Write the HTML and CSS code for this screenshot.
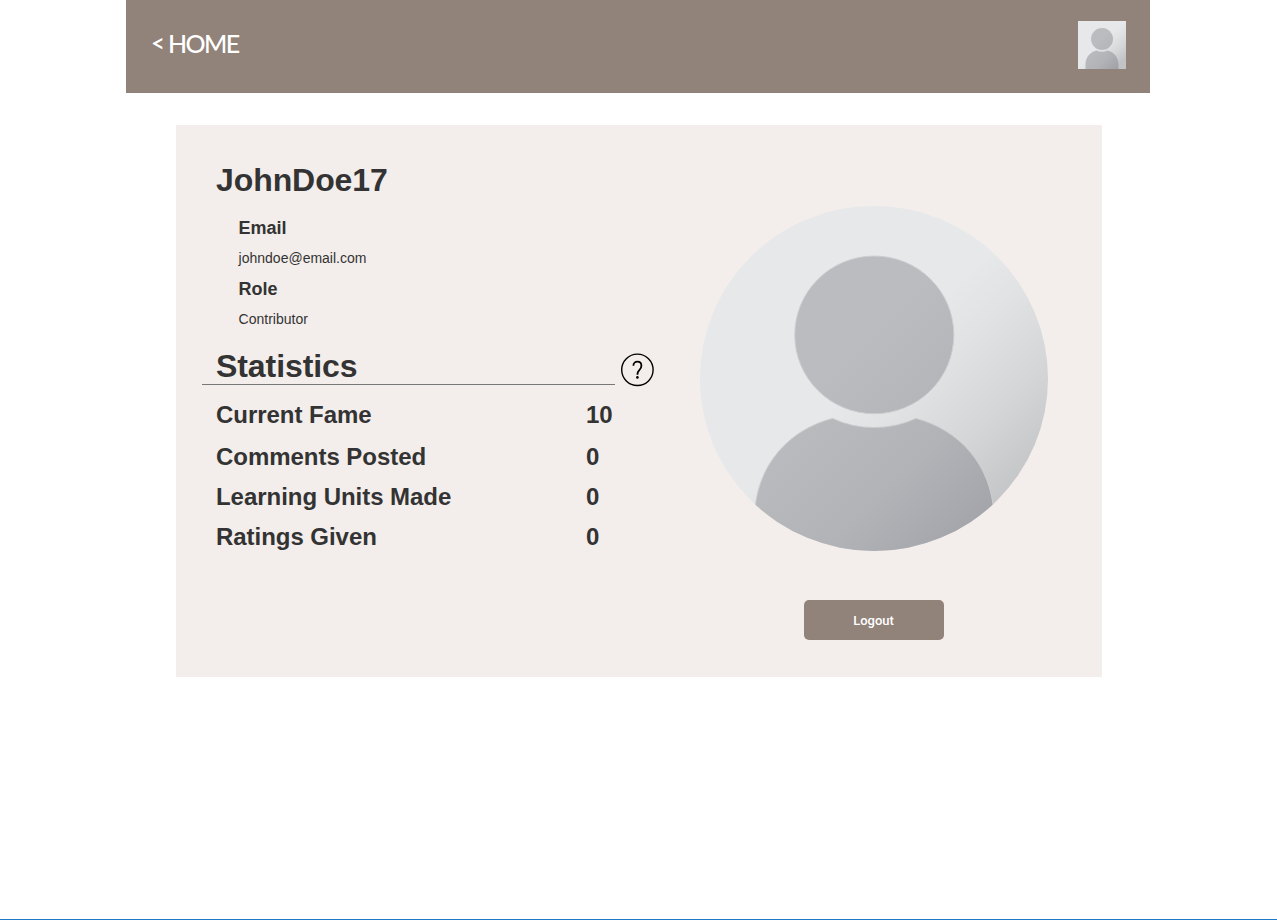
FILE: index.html
```html
<!DOCTYPE html>
<html lang="en">
<head>
<meta charset="utf-8">
<title>Profile</title>
<link rel="stylesheet" href="styles.css">
</head>
<body>
<svg class="defs" aria-hidden="true">
  <defs>
    <linearGradient id="backdrop" x1="0" y1="0" x2="1" y2="1">
      <stop offset="0.48" stop-color="#e6e8ea"/>
      <stop offset="0.58" stop-color="#e1e2e4"/>
      <stop offset="0.72" stop-color="#d5d6d8"/>
      <stop offset="0.88" stop-color="#c2c3c5"/>
    </linearGradient>
    <linearGradient id="figure" gradientUnits="userSpaceOnUse" x1="0" y1="0" x2="348" y2="348">
      <stop offset="0.42" stop-color="#bbbcc0"/>
      <stop offset="0.68" stop-color="#b2b3b7"/>
      <stop offset="0.9" stop-color="#a1a2a7"/>
    </linearGradient>
    <symbol id="person" viewBox="0 0 348 348" preserveAspectRatio="none">
      <rect width="348" height="348" fill="url(#backdrop)"/>
      <g fill="url(#figure)" stroke="#cccdcf" stroke-width="1">
        <ellipse cx="174.300" cy="130" rx="79.500" ry="79.500"/>
        <path d="M54.500 349V312C56.500 262 88 226 132.500 214.300Q152 223.500 174 223.500T216 214.300C260 226 292 262 294 312V349Z"/>
      </g>
    </symbol>
  </defs>
</svg>
<div class="page">
  <header class="topbar">
    <a class="home"><span class="arrow">&lt;</span><span class="home-label">HOME</span></a>
    <svg class="thumb"><use href="#person"/></svg>
  </header>
  <main class="card">
    <section class="details">
      <h1 class="title">JohnDoe17</h1>
      <dl class="info">
        <dt>Email</dt><dd>johndoe@email.com</dd>
        <dt>Role</dt><dd>Contributor</dd>
      </dl>
      <div class="stats-head">
        <h1 class="title stats-title">Statistics</h1>
        <svg class="help" viewBox="0 0 34 34" fill="none" stroke="#000">
          <circle cx="17.400" cy="16.800" r="15.700" stroke-width="1.400"/>
          <path d="M13.400 12.800C13.400 10.200 15 8.700 17.400 8.700s4 1.700 4 4c0 2-.9 3.200-2.100 4.500C17.900 18.600 17.400 19.600 17.400 21.700" stroke-width="1.800"/>
          <circle cx="17.400" cy="24.400" r="1.300" fill="#000" stroke="none"/>
        </svg>
      </div>
      <div class="stats">
        <div class="row first"><span>Current Fame</span><span>10</span></div>
        <div class="row"><span>Comments Posted</span><span>0</span></div>
        <div class="row"><span>Learning Units Made</span><span>0</span></div>
        <div class="row"><span>Ratings Given</span><span>0</span></div>
      </div>
    </section>
    <aside class="profile">
      <svg class="portrait"><use href="#person"/></svg>
      <button class="logout">Logout</button>
    </aside>
  </main>
</div>
</body>
</html>
```
FILE: styles.css
```css
* { box-sizing: border-box; }
body {
  margin: 0;
  height: 920px;
  background: #fff;
  border-bottom: 1px solid #1e7ac8;
  color: #333;
  font-family: "Liberation Sans", Arial, sans-serif;
}
.defs { display: block; width: 0; height: 0; }
.page { width: 1024px; margin-left: 126px; }
.topbar {
  height: 93px;
  padding: 21px 24px 0 25px;
  display: flex;
  justify-content: space-between;
  align-items: flex-start;
  background: #91827a;
}
.home {
  display: flex;
  padding-top: 7px;
  color: #fff;
  font: 500 25px/30px Lato, sans-serif;
}
.arrow { width: 17px; font-weight: 600; font-size: 24px; }
.home-label { letter-spacing: -1.6px; }
.thumb { width: 48px; height: 48px; }
.card {
  display: flex;
  width: 926px;
  height: 552px;
  margin: 32px 0 0 50px;
  background: #f3eeeb;
}
.details { width: 524px; padding: 37px 0 0 26px; }
.title {
  margin: 0;
  padding-left: 14px;
  font-size: 32px;
  line-height: 36px;
  letter-spacing: -0.08px;
}
.info { margin: 20px 0 0 36.6px; }
.info dt { font-size: 18px; line-height: 20px; font-weight: bold; }
.info dd { margin: 12px 0 13px; font-size: 14px; line-height: 16px; }
.info dd:last-child { margin-bottom: 0; }
.stats-head { display: flex; gap: 5px; margin-top: 21px; }
.stats-title { width: 413px; height: 37px; border-bottom: 1px solid #777; }
.help { width: 34px; height: 34px; margin-top: 5px; }
.stats { display: flex; flex-direction: column; gap: 12px; margin-top: 14px; padding-left: 14px; }
.row {
  display: grid;
  grid-template-columns: 370px auto;
  font-size: 24px;
  line-height: 28px;
  font-weight: bold;
  letter-spacing: -0.04px;
}
.first { margin-bottom: 2px; }
.profile { display: flex; flex-direction: column; align-items: center; width: 348px; padding-top: 81px; }
.portrait { width: 348px; height: 345px; border-radius: 50%; }
.logout {
  width: 140px;
  height: 40px;
  margin-top: 49px;
  padding: 0 7px 0 6px;
  border: 0;
  border-radius: 5px;
  background: #91827a;
  color: #fff;
  font: 500 13px Roboto, sans-serif;
}
```
